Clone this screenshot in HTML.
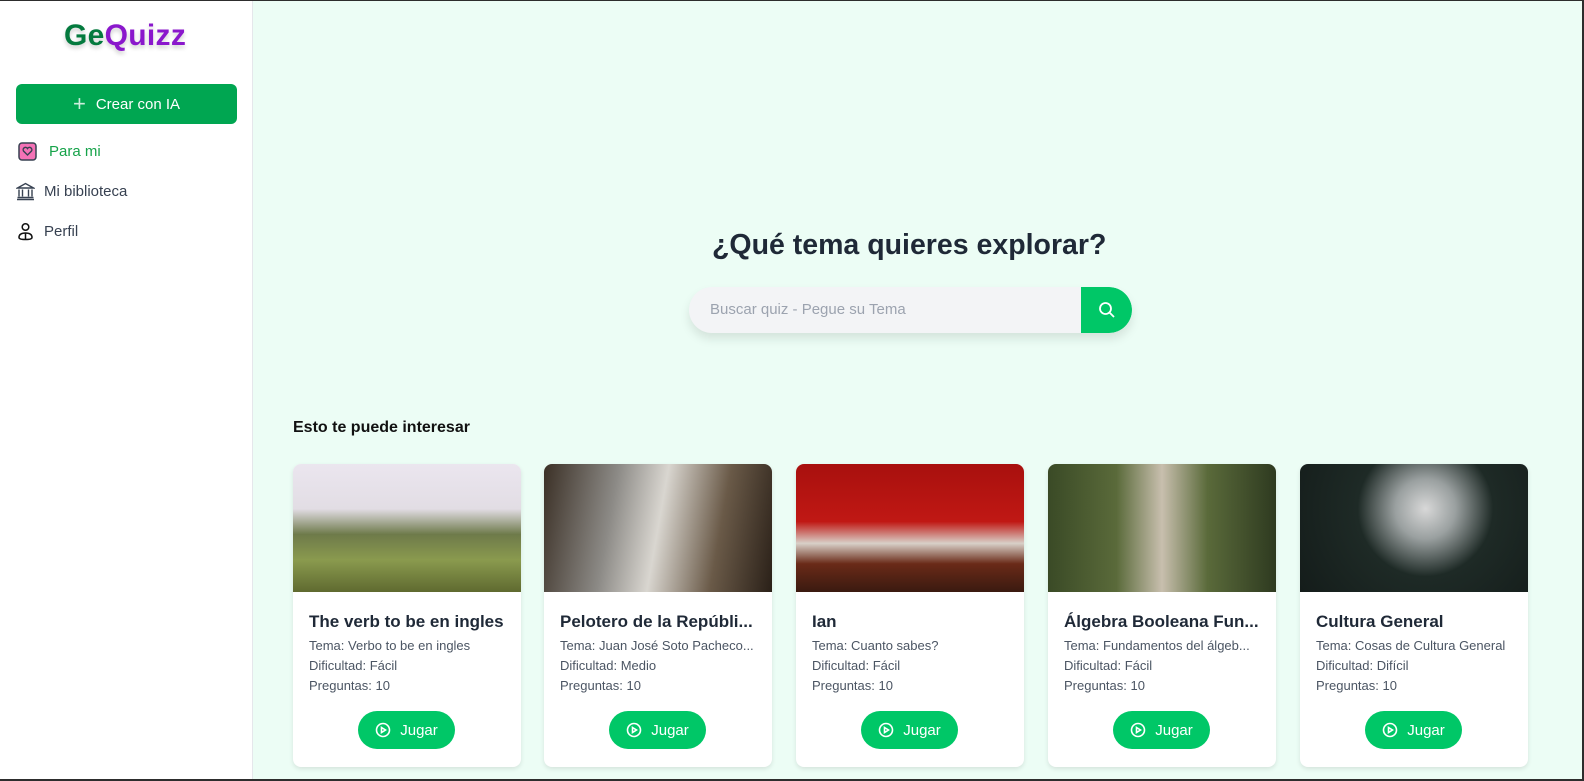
<!DOCTYPE html>
<html><head><meta charset="utf-8"><style>
*{box-sizing:border-box;margin:0;padding:0}
html,body{width:1584px;height:781px;overflow:hidden;font-family:"Liberation Sans",sans-serif}
body{background:#2d2d2d;position:relative}
#app{position:absolute;left:0;top:1px;width:1582px;height:778px;background:#ecfdf5;overflow:hidden}
.side{position:absolute;left:0;top:0;width:253px;height:100%;background:#fff;border-right:1px solid #e5e7eb}
.logo{position:absolute;left:64px;top:18px;font-size:30px;font-weight:bold;letter-spacing:0.3px;text-shadow:0 3px 4px rgba(0,0,0,.18)}
.btn{position:absolute;left:16px;top:83px;width:221px;height:40px;background:#00a651;border-radius:6px;color:#fff;font-size:15px;display:flex;align-items:center;justify-content:center;gap:10px}
.nav{position:absolute;left:16px;font-size:15px;color:#374151;display:flex;align-items:center;gap:9px}
h1{position:absolute;left:712px;top:228px;font-size:28.5px;color:#1f2937;font-weight:bold}
.search{position:absolute;left:689px;top:286px;width:443px;height:46px;background:#f3f4f6;border-radius:23px;box-shadow:0 6px 10px rgba(0,0,0,.1);overflow:hidden}
.search span{position:absolute;left:21px;top:14px;font-size:15px;color:#9ca3af}
.search .sb{position:absolute;right:0;top:0;width:51px;height:46px;background:#00c767;border-radius:0 23px 23px 0;display:flex;align-items:center;justify-content:center}
.sub{position:absolute;left:293px;top:418px;font-size:16px;font-weight:bold;color:#111}
.card{position:absolute;top:463px;width:228px;height:303px;background:#fff;border-radius:8px;overflow:hidden;box-shadow:0 2px 5px rgba(0,0,0,.1)}
.img{height:128px}
.ct{padding:20px 16px 0;}
.t{font-size:17px;font-weight:bold;color:#1f2937;white-space:nowrap;overflow:hidden;text-overflow:ellipsis;height:24px}
.l{font-size:13px;color:#4b5563;line-height:20px;white-space:nowrap;overflow:hidden;text-overflow:ellipsis}
.j{position:absolute;left:65px;top:247px;width:97px;height:38px;background:#00c767;border-radius:19px;color:#fff;font-size:15px;display:flex;align-items:center;justify-content:center;gap:9px}
</style></head><body><div id="app">
<div class="side">
<div class="logo"><span style="color:#047a3e">Ge</span><span style="color:#8a17cc">Quizz</span></div>
<div class="btn"><span style="font-size:22px;font-weight:300;opacity:.8">+</span>Crear con IA</div>
<div class="nav" style="top:141px;color:#16a34a;left:18px"><svg width="19" height="19" viewBox="0 0 19 19"><rect x="1" y="1" width="17" height="17" rx="3" fill="#f472b6" stroke="#374151" stroke-width="1.5"/><path d="M9.5 13 L5.5 9 A2 2 0 0 1 9.5 6.5 A2 2 0 0 1 13.5 9 Z" fill="none" stroke="#374151" stroke-width="1.4"/></svg><span style="margin-left:3px">Para mi</span></div>
<div class="nav" style="top:181px"><svg width="19" height="19" viewBox="0 0 19 19" fill="none" stroke="#374151" stroke-width="1.4"><path d="M1.5 6 L9.5 1.5 L17.5 6 Z M3 7.5v7 M6.5 7.5v7 M12.5 7.5v7 M16 7.5v7 M1.5 15.5h16 M1 17.5h17"/></svg>Mi biblioteca</div>
<div class="nav" style="top:221px"><svg width="19" height="19" viewBox="0 0 19 19" fill="none" stroke="#111" stroke-width="1.5"><circle cx="9.5" cy="5" r="3.3"/><path d="M3 15.5 Q3 11 9.5 11 Q16 11 16 15.5 Q16 17.5 9.5 17.5 Q3 17.5 3 15.5Z M9.5 11v6.5"/></svg>Perfil</div>
</div>
<h1>¿Qué tema quieres explorar?</h1>
<div class="search"><span>Buscar quiz - Pegue su Tema</span><div class="sb"><svg width="18" height="18" viewBox="0 0 18 18" fill="none" stroke="#fff" stroke-width="1.8"><circle cx="7.5" cy="7.5" r="5.5"/><path d="M11.5 11.5 L16 16"/></svg></div></div>
<div class="sub">Esto te puede interesar</div>

<div class="card" style="left:293px"><div class="img" style="background:linear-gradient(180deg,#ebe6ef 0%,#e2dde4 35%,#6e7a4a 55%,#8a9a4e 75%,#5f6a30 100%)"></div><div class="ct"><div class="t">The verb to be en ingles</div><div class="l">Tema: Verbo to be en ingles</div><div class="l">Dificultad: Fácil</div><div class="l">Preguntas: 10</div></div><div class="j"><svg width="16" height="16" viewBox="0 0 16 16" fill="none" stroke="#fff" stroke-width="1.6"><circle cx="8" cy="8" r="6.5"/><path d="M6.5 5.5 L10.5 8 L6.5 10.5Z"/></svg>Jugar</div></div>
<div class="card" style="left:544px"><div class="img" style="background:linear-gradient(100deg,#3b3026 0%,#8c8a86 30%,#d9d6d0 50%,#6a5a48 75%,#2a2018 100%)"></div><div class="ct"><div class="t">Pelotero de la Repúbli...</div><div class="l">Tema: Juan José Soto Pacheco...</div><div class="l">Dificultad: Medio</div><div class="l">Preguntas: 10</div></div><div class="j"><svg width="16" height="16" viewBox="0 0 16 16" fill="none" stroke="#fff" stroke-width="1.6"><circle cx="8" cy="8" r="6.5"/><path d="M6.5 5.5 L10.5 8 L6.5 10.5Z"/></svg>Jugar</div></div>
<div class="card" style="left:796px"><div class="img" style="background:linear-gradient(180deg,#a8100e 0%,#c01814 45%,#d8d0c8 62%,#6a2a18 78%,#3a1a10 100%)"></div><div class="ct"><div class="t">Ian</div><div class="l">Tema: Cuanto sabes?</div><div class="l">Dificultad: Fácil</div><div class="l">Preguntas: 10</div></div><div class="j"><svg width="16" height="16" viewBox="0 0 16 16" fill="none" stroke="#fff" stroke-width="1.6"><circle cx="8" cy="8" r="6.5"/><path d="M6.5 5.5 L10.5 8 L6.5 10.5Z"/></svg>Jugar</div></div>
<div class="card" style="left:1048px"><div class="img" style="background:linear-gradient(90deg,#3a4a26 0%,#5a6a3a 30%,#c8bfae 50%,#5a6a3a 70%,#2e3a20 100%)"></div><div class="ct"><div class="t">Álgebra Booleana Fun...</div><div class="l">Tema: Fundamentos del álgeb...</div><div class="l">Dificultad: Fácil</div><div class="l">Preguntas: 10</div></div><div class="j"><svg width="16" height="16" viewBox="0 0 16 16" fill="none" stroke="#fff" stroke-width="1.6"><circle cx="8" cy="8" r="6.5"/><path d="M6.5 5.5 L10.5 8 L6.5 10.5Z"/></svg>Jugar</div></div>
<div class="card" style="left:1300px"><div class="img" style="background:radial-gradient(circle at 55% 35%,#d8d8d8 0,#9aa0a0 20%,#1e2a26 45%,#141c1a 100%)"></div><div class="ct"><div class="t">Cultura General</div><div class="l">Tema: Cosas de Cultura General</div><div class="l">Dificultad: Difícil</div><div class="l">Preguntas: 10</div></div><div class="j"><svg width="16" height="16" viewBox="0 0 16 16" fill="none" stroke="#fff" stroke-width="1.6"><circle cx="8" cy="8" r="6.5"/><path d="M6.5 5.5 L10.5 8 L6.5 10.5Z"/></svg>Jugar</div></div>
</div></body></html>
